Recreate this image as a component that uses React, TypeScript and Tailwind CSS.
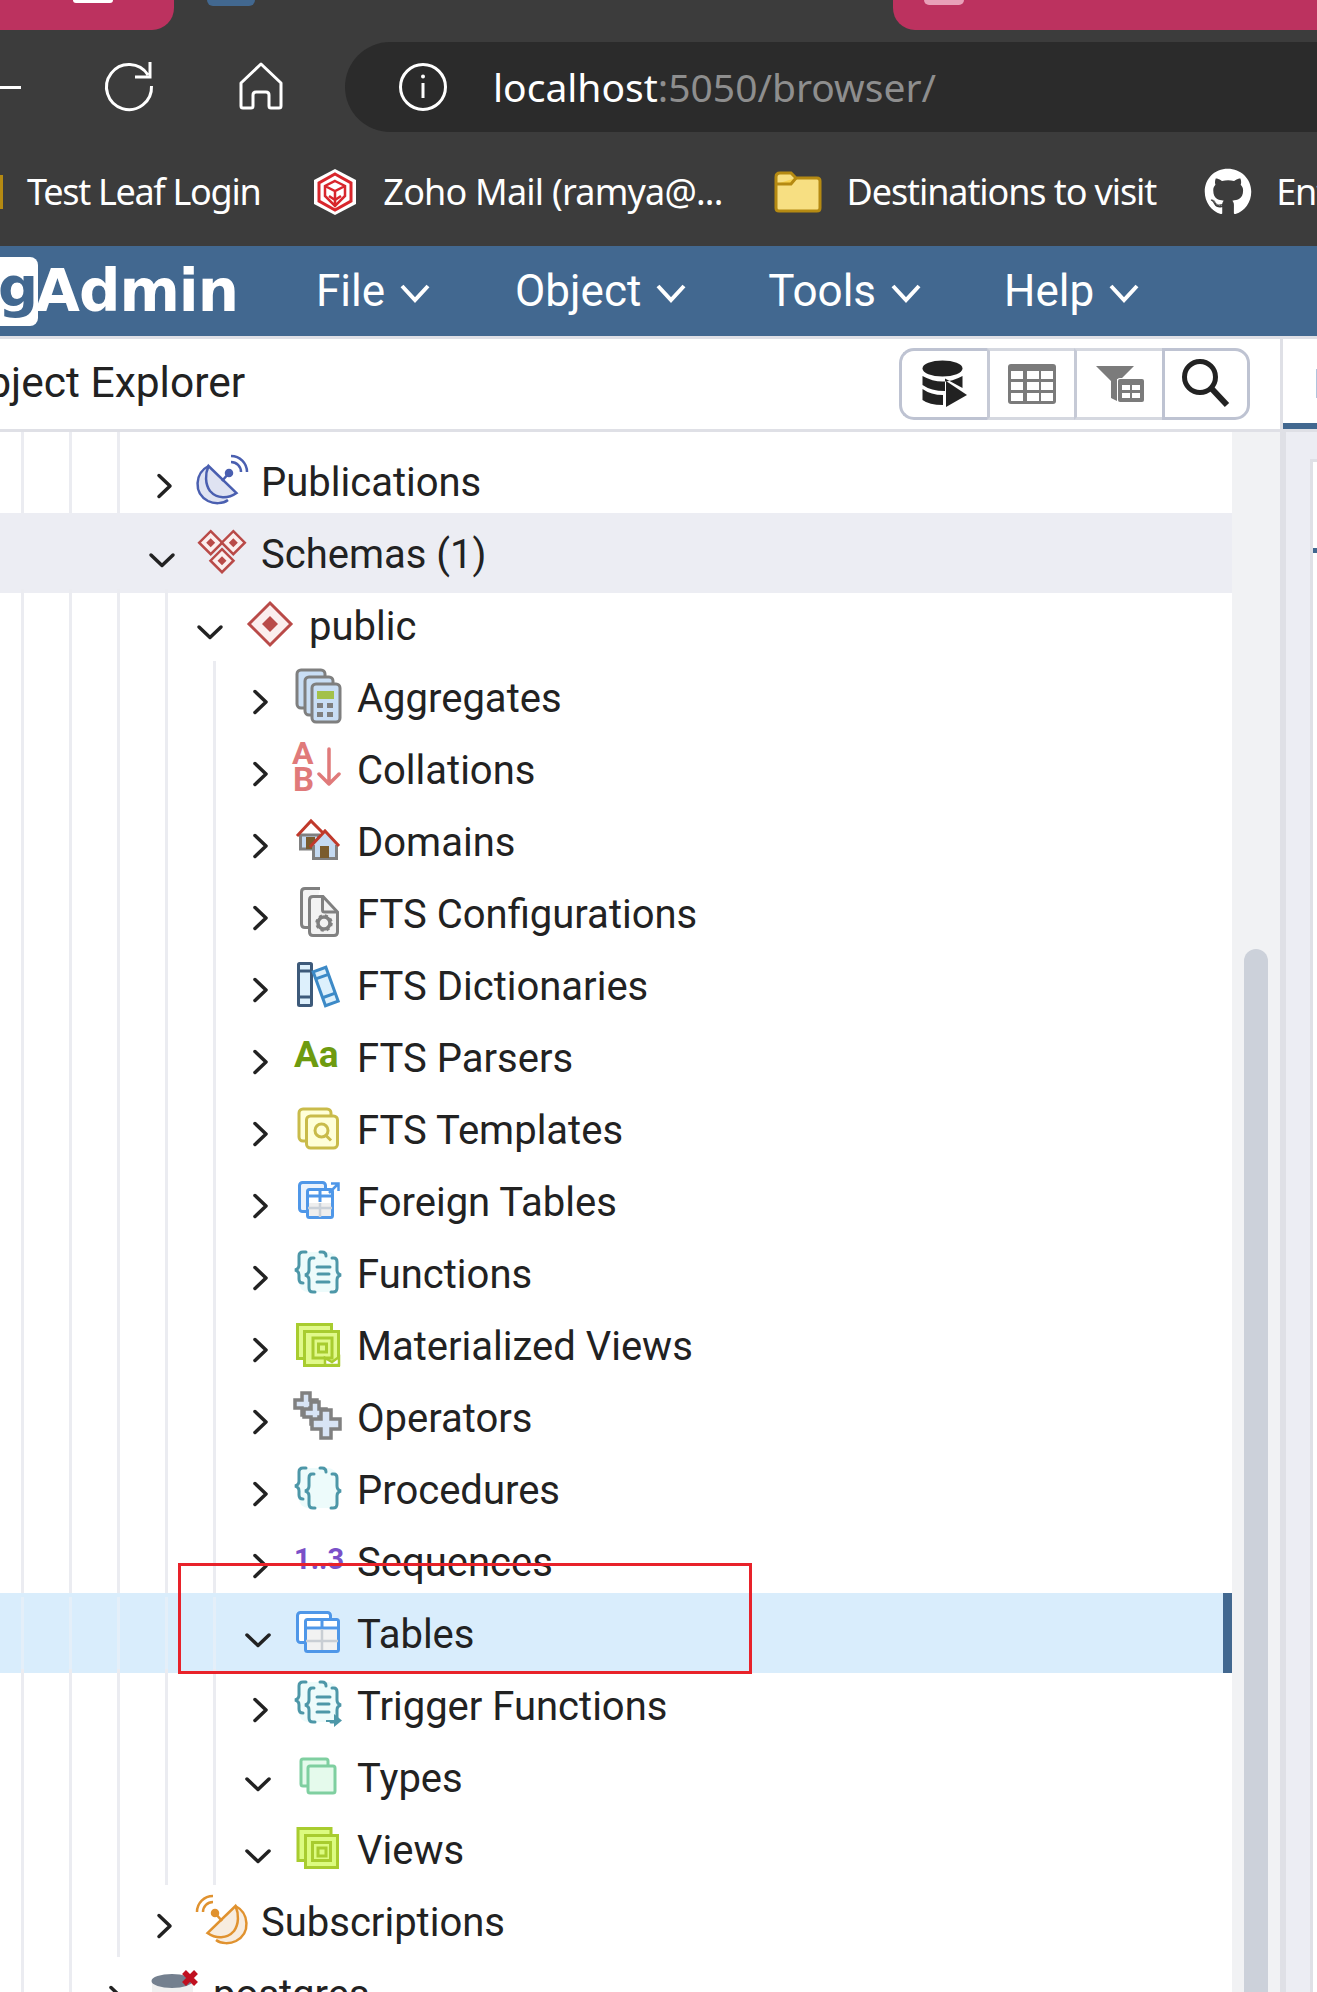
import { ReactNode } from "react";
import { FaGithub } from "react-icons/fa";

const Svg = ({ w = 60, h = 60, children }: { w?: number; h?: number; children: ReactNode }) => (
  <svg width={w} height={h} viewBox={`0 0 ${w} ${h}`} fill="none" className="block shrink-0 overflow-visible">
    {children}
  </svg>
);

const Dish = ({ stroke, fill, flip }: { stroke: string; fill: string; flip?: boolean }) => (
  <Svg>
    <g transform={flip ? "translate(60,0) scale(-1,1)" : undefined} stroke={stroke} strokeWidth="2.5">
      <path d="M16.5 15 C3 22 1 42 16 50 C22 53 31 53 36 49" fill={fill} />
      <path d="M16.5 15 L44.5 42 C36 48 25 48 18 40 C13 33 13 23 16.5 15 Z" fill={fill} />
      <path d="M30 30 L37 22" />
      <circle cx="37" cy="22" r="3" fill={stroke} />
      <path d="M39 5 A16 16 0 0 1 55 21" />
      <path d="M39 11 A10 10 0 0 1 49 21" />
    </g>
  </Svg>
);

const Diamond = ({ cx, cy, r, inner, sw = 2.5 }: { cx: number; cy: number; r: number; inner: number; sw?: number }) => (
  <g>
    <path d={`M${cx} ${cy - r}L${cx + r} ${cy}L${cx} ${cy + r}L${cx - r} ${cy}Z`} fill="#fbeeee" stroke="#b94a48" strokeWidth={sw} />
    <path d={`M${cx} ${cy - inner}L${cx + inner} ${cy}L${cx} ${cy + inner}L${cx - inner} ${cy}Z`} fill="#b94a48" />
  </g>
);

const SchemasIcon = () => (
  <Svg>
    <Diamond cx={18.7} cy={19.7} r={11.5} inner={4.5} />
    <Diamond cx={41.3} cy={19.7} r={11.5} inner={4.5} />
    <Diamond cx={30} cy={37.7} r={11.5} inner={4.5} />
  </Svg>
);

const PublicIcon = () => (
  <Svg>
    <Diamond cx={30} cy={29} r={21} inner={8} sw={3} />
  </Svg>
);

const Card = ({ x, y }: { x: number; y: number }) => (
  <rect x={x} y={y} width="28" height="38" rx="4" fill="#c9def5" stroke="#7f7f7f" strokeWidth="3" />
);

const AggregatesIcon = () => (
  <Svg>
    <Card x={9} y={3} />
    <Card x={17} y={10} />
    <Card x={24} y={17} />
    <rect x="29" y="24" width="17" height="8" fill="#a3c14a" />
    <rect x="29" y="36" width="6" height="5" fill="#7f7f7f" />
    <rect x="39" y="36" width="6" height="5" fill="#7f7f7f" />
    <rect x="29" y="45" width="6" height="5" fill="#7f7f7f" />
    <rect x="39" y="45" width="6" height="5" fill="#7f7f7f" />
  </Svg>
);

const CollationsIcon = () => (
  <Svg>
    <text x="4" y="25" fontSize="32" fontWeight="700" fontFamily="Roboto, sans-serif" fill="#e07a7a">A</text>
    <text x="5" y="52" fontSize="33" fontWeight="700" fontFamily="Roboto, sans-serif" fill="#e07a7a">B</text>
    <path d="M41 10V45M31 35L41 45L51 35" stroke="#e07a7a" strokeWidth="3.5" strokeLinecap="round" strokeLinejoin="round" />
  </Svg>
);

const DomainsIcon = () => (
  <Svg>
    <rect x="12.5" y="24" width="18" height="14" fill="#c4daf2" stroke="#808080" strokeWidth="3" />
    <rect x="18" y="26" width="9" height="12" fill="#7a5c2e" />
    <path d="M9 25L23 10L36 23" stroke="#c0392b" strokeWidth="3" />
    <path d="M25 34L37 21L49 34V48H25Z" fill="#c4daf2" />
    <path d="M25.5 34V47.5H48.5V34" stroke="#808080" strokeWidth="3" />
    <rect x="32" y="35" width="9" height="12" fill="#7a5c2e" />
    <path d="M22 36L37 20L51 35" stroke="#c0392b" strokeWidth="3" />
  </Svg>
);

const FtsConfigIcon = () => (
  <Svg>
    <path d="M32 5.5H17Q13.5 5.5 13.5 9V41Q13.5 44.5 17 44.5H23" fill="#f5f5f5" stroke="#808080" strokeWidth="3" />
    <path d="M25 13.5H35L49.5 29V49Q49.5 52.5 46 52.5H25Q21.5 52.5 21.5 49V17Q21.5 13.5 25 13.5Z" fill="#f2f2f2" stroke="#808080" strokeWidth="3" />
    <path d="M34.5 14V27Q34.5 29 36.5 29H49" stroke="#808080" strokeWidth="3" />
    <circle cx="36" cy="40" r="6" stroke="#808080" strokeWidth="3.5" />
    <circle cx="36" cy="40" r="7.5" stroke="#808080" strokeWidth="2.5" strokeDasharray="3 3" />
  </Svg>
);

const FtsDictIcon = () => (
  <Svg>
    <rect x="10.5" y="8.5" width="13" height="42" rx="1" fill="#ddf0fc" stroke="#3d5a7a" strokeWidth="3" />
    <path d="M10 16H24M10 42H24" stroke="#3d5a7a" strokeWidth="3" />
    <g transform="rotate(-20 37.7 31.7)">
      <rect x="31" y="13.5" width="13.5" height="36" fill="#ddf0fc" stroke="#3d8ac7" strokeWidth="3" />
      <path d="M31 21H44.5M31 41H44.5" stroke="#3d8ac7" strokeWidth="3" />
    </g>
  </Svg>
);

const ParsersIcon = () => (
  <Svg>
    <text x="6" y="40" fontSize="37" fontWeight="700" fontFamily="Roboto, sans-serif" fill="#6e9b10">Aa</text>
  </Svg>
);

const FtsTemplatesIcon = () => (
  <Svg>
    <rect x="11" y="10" width="32" height="32" rx="4" fill="#ffffd8" stroke="#c9bb4a" strokeWidth="3" />
    <rect x="18.5" y="17" width="31" height="32" rx="4" fill="#ffffd8" stroke="#c9bb4a" strokeWidth="3" />
    <circle cx="33.5" cy="31.5" r="6.5" stroke="#c9bb4a" strokeWidth="3" />
    <path d="M38 36.5L43 41.5" stroke="#c9bb4a" strokeWidth="3" />
  </Svg>
);

const ForeignTablesIcon = () => (
  <Svg>
    <rect x="11.5" y="11.5" width="26" height="29" rx="3" fill="#eaf2fc" stroke="#4f97e8" strokeWidth="3" />
    <rect x="19.5" y="18.5" width="25" height="28" rx="2" fill="#ffffff" stroke="#4f97e8" strokeWidth="3" />
    <rect x="21" y="32" width="22" height="13" fill="#eeeeee" />
    <path d="M20 25H44" stroke="#4f97e8" strokeWidth="3" />
    <path d="M20 37H44M32 32V46" stroke="#c9d0d8" strokeWidth="2.5" />
    <path d="M32 19V31" stroke="#4f97e8" strokeWidth="3" />
    <path d="M41 22L50 13M43 12.5H50.5V20" stroke="#4f97e8" strokeWidth="2.5" />
  </Svg>
);

const Braces = ({ dy = 0, lines }: { dy?: number; lines?: boolean }) => (
  <g transform={`translate(0 ${dy})`} stroke="#4d97a8" strokeWidth="3" strokeLinecap="round">
    <rect x="11" y="9" width="38" height="40" rx="9" fill="#edfbfb" stroke="none" />
    <path d="M18 9H15Q11 9 11 13V22Q11 26 7 27Q11 28 11 32V36Q11 40 15 40" />
    <path d="M32 9H34Q38 9 38 13" />
    <path d="M26 15H24Q21 15 21 19V27Q21 31 17 32Q21 33 21 37V45Q21 49 25 49H27" />
    <path d="M44 15H46Q49 15 49 19V27Q49 31 53 32Q49 33 49 37V45Q49 49 45 49H43" />
    {lines && <path d="M29 24H42M30 31H41M29 39H41" />}
  </g>
);

const FunctionsIcon = () => (
  <Svg>
    <Braces lines />
  </Svg>
);

const ProceduresIcon = () => (
  <Svg>
    <Braces />
  </Svg>
);

const TriggerIcon = () => (
  <Svg>
    <Braces dy={-2} lines />
    <path d="M38 45H46V39L54 45.5L46 52V47H38Z" fill="#4d97a8" />
  </Svg>
);

const MatViewsIcon = () => (
  <Svg>
    <rect x="9.5" y="9.5" width="34" height="34" fill="#e0f98a" stroke="#a8cc2f" strokeWidth="3" />
    <rect x="16.5" y="16.5" width="34" height="34" fill="#e0f98a" stroke="#a8cc2f" strokeWidth="3" />
    <rect x="25" y="23" width="19" height="20" fill="#e0f98a" stroke="#a8cc2f" strokeWidth="3" />
    <rect x="30.5" y="29" width="8" height="8" fill="#e0f98a" stroke="#a8cc2f" strokeWidth="3" />
    <path d="M37 50V43L44 47L51 42V50Z" fill="#ffffff" stroke="#a8cc2f" strokeWidth="2.5" />
  </Svg>
);

const plus = (cx: number, cy: number, r: number, a: number) =>
  `M${cx - a} ${cy - r}H${cx + a}V${cy - a}H${cx + r}V${cy + a}H${cx + a}V${cy + r}H${cx - a}V${cy + a}H${cx - r}V${cy - a}H${cx - a}Z`;

const OperatorsIcon = () => (
  <Svg>
    <path d={plus(18, 17, 11, 4)} fill="#d8e4f5" stroke="#808080" strokeWidth="3.5" />
    <path d={plus(27, 26, 11, 4)} fill="#d8e4f5" stroke="#808080" strokeWidth="3.5" />
    <path d={plus(38, 37, 14, 5)} fill="#d8e4f5" stroke="#808080" strokeWidth="3.5" />
  </Svg>
);

const SequencesIcon = () => (
  <Svg>
    <text x="6" y="38" fontSize="29" fontWeight="700" fontFamily="Roboto, sans-serif" fill="#7a50c8">1..3</text>
  </Svg>
);

const TablesIcon = () => (
  <Svg>
    <rect x="9.5" y="9.5" width="33" height="30" rx="3" fill="#ffffff" stroke="#4f97e8" strokeWidth="3" />
    <rect x="17.5" y="16.5" width="33" height="32" rx="2" fill="#f2f2f2" stroke="#4f97e8" strokeWidth="3" />
    <rect x="19" y="18" width="30" height="9" fill="#ffffff" />
    <path d="M18 25H50" stroke="#4f97e8" strokeWidth="3" />
    <path d="M18 38H50M34 26V47" stroke="#c9ced4" strokeWidth="2.5" />
    <path d="M34 18V26" stroke="#4f97e8" strokeWidth="3" />
  </Svg>
);

const TypesIcon = () => (
  <Svg>
    <rect x="13" y="12" width="27" height="27" rx="2" fill="#e5faec" stroke="#7fcfa0" strokeWidth="3" />
    <rect x="20" y="19" width="27" height="27" rx="2" fill="#e5faec" stroke="#7fcfa0" strokeWidth="3" />
  </Svg>
);

const ViewsIcon = () => (
  <Svg>
    <rect x="10" y="9.5" width="33" height="32" fill="#dcfb80" stroke="#a8cc2f" strokeWidth="3" />
    <rect x="17.5" y="16.5" width="32" height="32" fill="#dcfb80" stroke="#a8cc2f" strokeWidth="3" />
    <rect x="24.5" y="23.5" width="18" height="18" fill="#dcfb80" stroke="#a8cc2f" strokeWidth="3" />
    <rect x="30" y="29" width="8" height="8" fill="#dcfb80" stroke="#a8cc2f" strokeWidth="3" />
  </Svg>
);

const ServerIcon = () => (
  <Svg>
    <path d="M8 18V36H49V18Z" fill="#f0f0f0" />
    <ellipse cx="28" cy="18" rx="20.5" ry="7" fill="#74808f" />
    <path d="M40 9L52 21M52 9L40 21" stroke="#c01020" strokeWidth="5.5" />
  </Svg>
);

const Chevron = ({ open }: { open?: boolean }) => (
  <svg width="24" height="60" viewBox="0 0 24 60" fill="none" className="block shrink-0 overflow-visible">
    <path
      d={open ? "M-1 32L10 42.5L21 32" : "M7 24.5L18 35L7 45.5"}
      stroke="#222222"
      strokeWidth="3.5"
      strokeLinecap="round"
      strokeLinejoin="round"
    />
  </svg>
);

type Item = {
  depth: number;
  label: string;
  icon: ReactNode;
  open?: boolean;
  hover?: boolean;
  active?: boolean;
};

const items: Item[] = [
  { depth: 3, label: "Publications", icon: <Dish stroke="#4a5fb0" fill="#dfe3f2" /> },
  { depth: 3, label: "Schemas (1)", icon: <SchemasIcon />, open: true, hover: true },
  { depth: 4, label: "public", icon: <PublicIcon />, open: true },
  { depth: 5, label: "Aggregates", icon: <AggregatesIcon /> },
  { depth: 5, label: "Collations", icon: <CollationsIcon /> },
  { depth: 5, label: "Domains", icon: <DomainsIcon /> },
  { depth: 5, label: "FTS Configurations", icon: <FtsConfigIcon /> },
  { depth: 5, label: "FTS Dictionaries", icon: <FtsDictIcon /> },
  { depth: 5, label: "FTS Parsers", icon: <ParsersIcon /> },
  { depth: 5, label: "FTS Templates", icon: <FtsTemplatesIcon /> },
  { depth: 5, label: "Foreign Tables", icon: <ForeignTablesIcon /> },
  { depth: 5, label: "Functions", icon: <FunctionsIcon /> },
  { depth: 5, label: "Materialized Views", icon: <MatViewsIcon /> },
  { depth: 5, label: "Operators", icon: <OperatorsIcon /> },
  { depth: 5, label: "Procedures", icon: <ProceduresIcon /> },
  { depth: 5, label: "Sequences", icon: <SequencesIcon /> },
  { depth: 5, label: "Tables", icon: <TablesIcon />, open: true, active: true },
  { depth: 5, label: "Trigger Functions", icon: <TriggerIcon /> },
  { depth: 5, label: "Types", icon: <TypesIcon />, open: true },
  { depth: 5, label: "Views", icon: <ViewsIcon />, open: true },
  { depth: 3, label: "Subscriptions", icon: <Dish stroke="#e0922f" fill="#f7ecdf" flip /> },
  { depth: 2, label: "postgres", icon: <ServerIcon /> },
];

const Guides = ({ depth, color = "border-[#ebecf1]" }: { depth: number; color?: string }) => (
  <>
    <div className="w-[21px] shrink-0" />
    {Array.from({ length: depth }).map((_, i) => (
      <div key={i} className={`w-[48px] shrink-0 border-l-[3px] ${color}`} />
    ))}
  </>
);

const TreeRow = ({ item }: { item: Item }) => {
  let rowClass = "h-[72px]";
  let guide = "border-[#ebecf1]";
  if (item.hover) {
    rowClass = "box-border h-[80px] -my-1 py-1 bg-[#ecedf3]";
    guide = "border-[#ecedf3]";
  }
  if (item.active) {
    rowClass = "box-border h-[80px] -my-1 py-1 bg-[#d9edfc] border-r-[9px] border-[#426890]";
    guide = "border-[#e4eff9]";
  }
  return (
    <div className={`flex items-stretch shrink-0 ${rowClass}`}>
      <Guides depth={item.depth} color={guide} />
      <div className="flex items-center -ml-[13px]">
        <Chevron open={item.open} />
        <div className="ml-[16px] w-[60px]">{item.icon}</div>
        <span className="ml-[9px] mt-[3px] text-[40px] leading-none text-[#222222] whitespace-nowrap">{item.label}</span>
      </div>
    </div>
  );
};

const MenuItem = ({ label, className }: { label: string; className: string }) => (
  <div className={`flex items-center gap-[15px] ${className}`}>
    <span className="text-[44px] leading-none text-white">{label}</span>
    <svg width="30" height="20" viewBox="0 0 30 20" fill="none" className="mt-1">
      <path d="M2 3L15 17L28 3" stroke="#ffffff" strokeWidth="4" />
    </svg>
  </div>
);

const Bookmark = ({
  label,
  className,
  textClass = "tracking-[-1.1px]",
  icon,
}: {
  label: string;
  className: string;
  textClass?: string;
  icon: ReactNode;
}) => (
  <div className={`flex items-center shrink-0 ${className}`}>
    {icon}
    <span className={`text-[36px] leading-none text-white whitespace-nowrap ${textClass}`}>{label}</span>
  </div>
);

export default function App() {
  return (
    <div className="relative w-[1317px] h-[1992px] overflow-hidden bg-white font-[Roboto,sans-serif]">
      {/* browser chrome */}
      <div className="h-[246px] bg-[#3c3c3c] font-['Noto_Sans',sans-serif]">
        <div className="flex h-[42px] items-start">
          <div className="relative w-[174px] h-[30px] bg-[#bc325f] rounded-br-[22px]">
            <div className="w-[40px] h-[3px] ml-[73px] bg-white rounded-b-[3px]" />
          </div>
          <div className="w-[48px] h-[6px] ml-[33px] bg-[#426890] rounded-b-[6px]" />
          <div className="w-[638px] shrink-0" />
          <div className="flex-1 h-[30px] bg-[#bc325f] rounded-bl-[22px] pl-[31px]">
            <div className="w-[40px] h-[5px] bg-[#e8a0b8] rounded-b-[5px]" />
          </div>
        </div>
        <div className="flex h-[90px] items-center">
          <div className="w-[21px] h-[3px] bg-white" />
          <div className="ml-[79px]">
            <Svg w={56} h={56}>
              <path d="M48 16A22.5 22.5 0 1 0 51.5 27M50 3V18H35" stroke="#ffffff" strokeWidth="3" />
            </Svg>
          </div>
          <div className="ml-[82px]">
            <Svg w={48} h={52}>
              <path
                d="M3 22L23 3L43 22V45Q43 47 41 47H33Q31 47 31 45V34Q31 31 28 31H18Q15 31 15 34V45Q15 47 13 47H5Q3 47 3 45Z"
                stroke="#ffffff"
                strokeWidth="3"
                strokeLinejoin="round"
              />
            </Svg>
          </div>
          <div className="ml-[59px] flex flex-1 h-[90px] items-center rounded-l-[45px] bg-[#2b2b2b]">
            <div className="ml-[53px]">
              <Svg w={50} h={50}>
                <circle cx="25" cy="25" r="22.5" stroke="#ffffff" strokeWidth="3" />
                <path d="M25 21V36" stroke="#ffffff" strokeWidth="3" />
                <circle cx="25" cy="14.5" r="2" fill="#ffffff" />
              </Svg>
            </div>
            <span className="ml-[45px] mb-[2px] text-[39px] leading-none whitespace-nowrap text-white">
              localhost<span className="text-[#8e8e8e]">:5050/browser/</span>
            </span>
          </div>
        </div>
        <div className="flex h-[114px] items-center pt-[5px] overflow-hidden">
          <div className="w-[3px] h-[34px] bg-[#b58a12] shrink-0" />
          <Bookmark className="ml-[24px]" label="Test Leaf Login" textClass="tracking-[-1.3px]" icon={null} />
          <Bookmark
            className="ml-[53px] gap-[26px]"
            label="Zoho Mail (ramya@..."
            textClass="tracking-[-0.8px]"
            icon={
              <Svg w={44} h={48}>
                <path d="M22 1L43 12V36L22 47L1 36V12Z" fill="#ffffff" />
                <path d="M22 6L38 15V33L22 42L6 33V15Z" fill="#ffffff" stroke="#d8262c" strokeWidth="3" />
                <path d="M22 13L32 18V28L22 38L12 28V18ZM12 18L22 23L32 18M22 23V38M16 28L22 32L28 28" stroke="#d8262c" strokeWidth="2.5" />
              </Svg>
            }
          />
          <Bookmark
            className="ml-[51px] gap-[25px]"
            label="Destinations to visit"
            icon={
              <Svg w={48} h={42}>
                <path d="M2 6Q2 2 6 2H17L22 7H43Q46 7 46 10V37Q46 40 43 40H5Q2 40 2 37Z" fill="#f7df82" stroke="#b58a12" strokeWidth="3" />
                <path d="M2 13H17L22 7" fill="#f7d24f" stroke="#b58a12" strokeWidth="3" />
              </Svg>
            }
          />
          <Bookmark
            className="ml-[48px] gap-[24px]"
            label="Enter"
            icon={<FaGithub className="w-[48px] h-[48px] text-white" />}
          />
        </div>
      </div>

      {/* pgAdmin header */}
      <div className="flex h-[90px] items-center bg-[#426890]">
        <div className="flex w-[38px] h-[69px] justify-end items-center overflow-hidden rounded-r-[8px] bg-white">
          <span className="font-['DejaVu_Sans',sans-serif] font-bold text-[56px] leading-none text-[#426890] -mt-2">g</span>
        </div>
        <span className="-ml-[3px] font-['DejaVu_Sans',sans-serif] font-bold text-[58px] leading-none tracking-[-1px] text-white">Admin</span>
        <MenuItem label="File" className="ml-[78px]" />
        <MenuItem label="Object" className="ml-[85px]" />
        <MenuItem label="Tools" className="ml-[82px]" />
        <MenuItem label="Help" className="ml-[83px]" />
      </div>
      <div className="h-[3px] bg-[#dfe0e6]" />

      <div className="flex h-[1653px]">
        {/* object explorer */}
        <div className="flex w-[1280px] flex-col shrink-0">
          <div className="flex h-[93px] shrink-0 items-center border-b-[3px] border-[#dfe0e6] bg-white">
            <span className="-ml-[42px] mb-[2px] text-[42.5px] leading-none text-[#222222] whitespace-nowrap">Object Explorer</span>
            <div className="ml-auto mr-[30px] flex h-[72px]">
              <div className="flex w-[88px] items-center justify-center rounded-l-[15px] border-[3px] border-r-0 border-[#bec3d2]">
                <Svg w={48} h={48}>
                  <ellipse cx="21.5" cy="8.5" rx="20" ry="8" fill="#222222" />
                  <path d="M1.5 16Q21.5 27 41.5 16V28L24 18.5V31Q10 31 1.5 25Z" fill="#222222" />
                  <path d="M1.5 29Q10 35 22 35V45Q8 45 1.5 40Z" fill="#222222" />
                  <path d="M25 21L46 35L25 47Z" fill="#222222" />
                </Svg>
              </div>
              <div className="flex w-[87px] items-center justify-center border-y-[3px] border-l-[3px] border-y-[#d5d8e0] border-l-[#c6cad6]">
                <Svg w={48} h={40}>
                  <rect width="48" height="40" rx="3" fill="#7b7b7b" />
                  {[3, 19, 33].map((x) =>
                    [7, 18, 29].map((y) => <rect key={`${x}-${y}`} x={x} y={y} width="12" height="8" fill="#ffffff" />)
                  )}
                </Svg>
              </div>
              <div className="flex w-[88px] items-center justify-center border-y-[3px] border-l-[3px] border-y-[#d5d8e0] border-l-[#c6cad6]">
                <Svg w={50} h={38}>
                  <path d="M1 1H39L26 14H22V36L16 33V16Z" fill="#7b7b7b" />
                  <rect x="22" y="13" width="28" height="25" rx="3" fill="#ffffff" />
                  <rect x="23" y="14" width="26" height="23" rx="2" fill="#7b7b7b" />
                  <rect x="27" y="20" width="8" height="5" fill="#ffffff" />
                  <rect x="37" y="20" width="8" height="5" fill="#ffffff" />
                  <rect x="27" y="28" width="8" height="5" fill="#ffffff" />
                  <rect x="37" y="28" width="8" height="5" fill="#ffffff" />
                </Svg>
              </div>
              <div className="flex w-[88px] items-center justify-center rounded-r-[15px] border-[3px] border-[#bec3d2]">
                <Svg w={52} h={52}>
                  <circle cx="20" cy="19" r="15.5" stroke="#222222" strokeWidth="5" />
                  <path d="M32 31L47 47" stroke="#222222" strokeWidth="6" />
                </Svg>
              </div>
            </div>
          </div>
          <div className="flex flex-1 overflow-hidden">
            <div className="flex w-[1232px] flex-col shrink-0 overflow-hidden">
              <div className="flex h-[13px] shrink-0">
                <Guides depth={3} />
              </div>
              {items.map((item) => (
                <TreeRow key={item.label} item={item} />
              ))}
            </div>
            <div className="flex-1 bg-[#f1f2f4] pt-[517px] pl-3">
              <div className="h-full w-[24px] rounded-t-[12px] bg-[#ccd1da]" />
            </div>
          </div>
        </div>

        {/* right side, cut off */}
        <div className="flex flex-1 flex-col border-l-[3px] border-[#dfe0e6]">
          <div className="h-[84px] shrink-0 bg-white pt-[30px] pl-[33px]">
            <div className="w-px h-[29px] bg-[#b0c4dd]" />
          </div>
          <div className="h-[6px] shrink-0 bg-[#426890]" />
          <div className="h-[3px] shrink-0 bg-[#dfe0e6]" />
          <div className="flex-1 border-l-[3px] border-[#dfe0e6] bg-[#ecedf3] pt-[27px] pl-[24px]">
            <div className="h-full border-l-[3px] border-t-[3px] border-[#dfe0e6] bg-white pt-[86px]">
              <div className="h-[5px] bg-[#426890]" />
            </div>
          </div>
        </div>
      </div>

      {/* red annotation box */}
      <div className="absolute left-[178px] top-[1563px] w-[574px] h-[111px] border-[3px] border-[#e8222a]" />
    </div>
  );
}
